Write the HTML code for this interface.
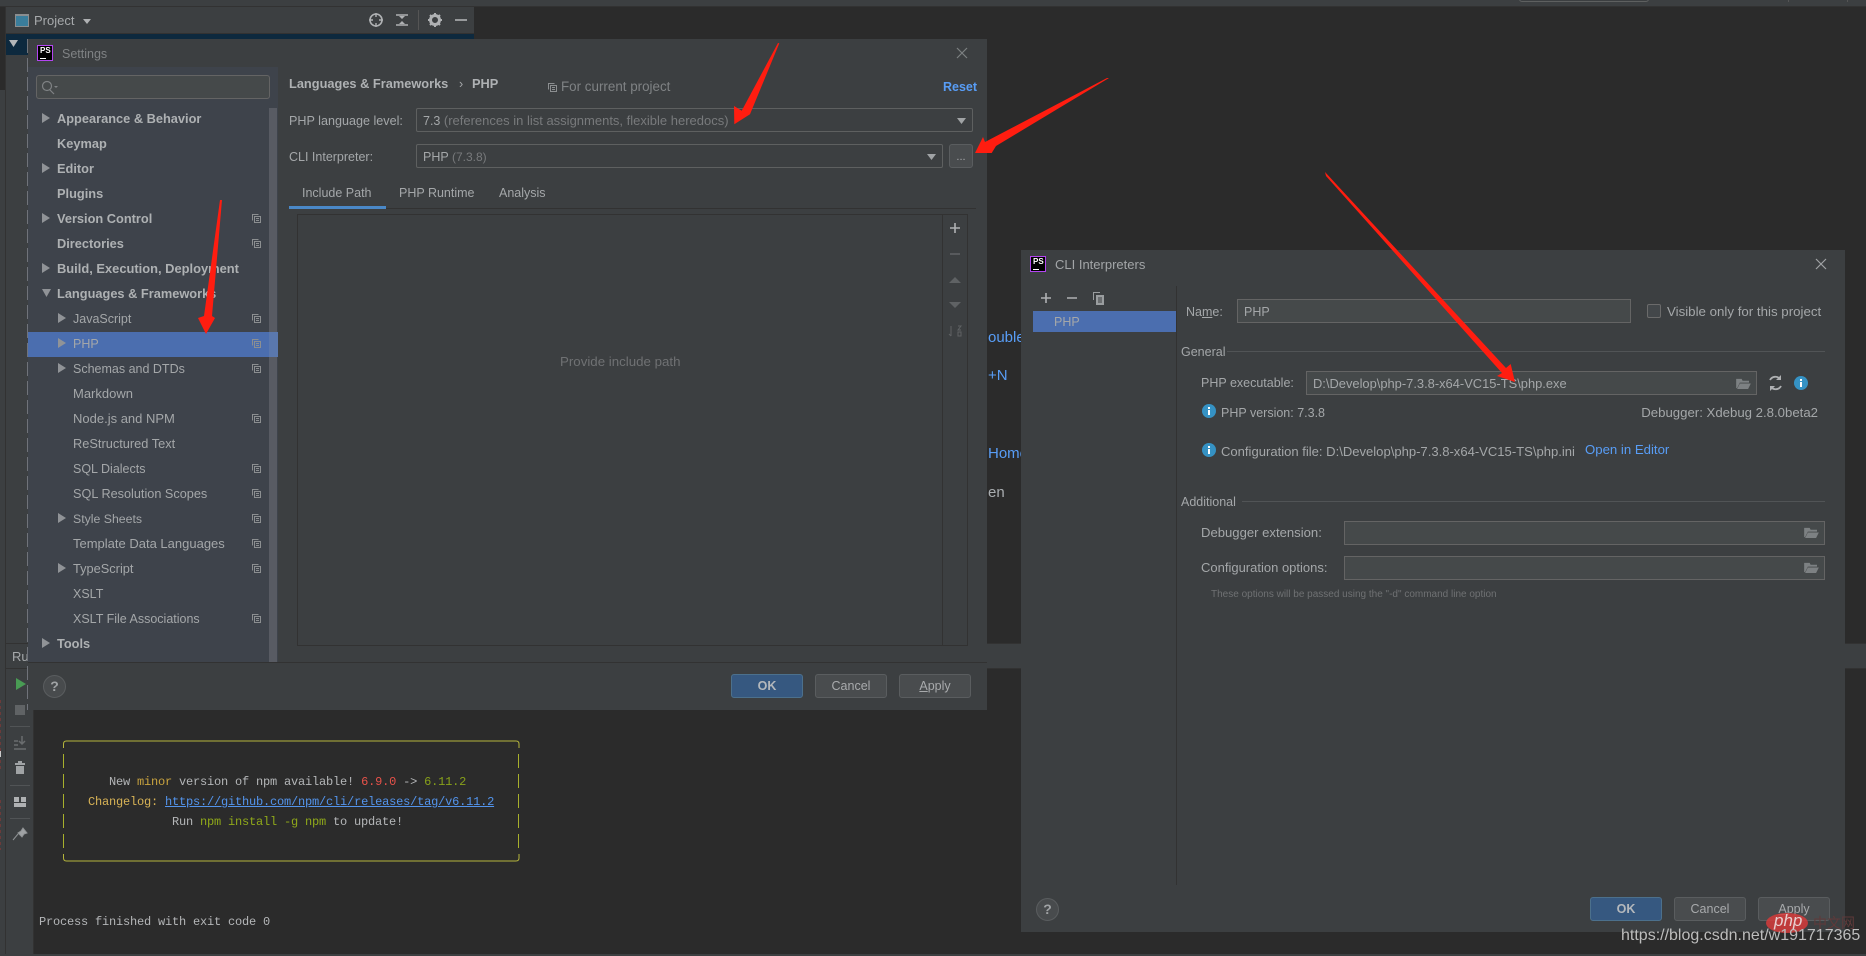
<!DOCTYPE html>
<html><head><meta charset="utf-8"><title>Settings</title>
<style>
html,body{margin:0;padding:0;background:#2b2b2b}
body{position:relative;width:1866px;height:956px;overflow:hidden;font-family:"Liberation Sans","Noto Sans CJK SC",sans-serif;font-size:12.5px;color:#a4a7a9}
div,span.a{box-sizing:border-box}
.b{position:absolute}
.t{position:absolute;white-space:nowrap;line-height:16px;height:16px;margin-top:-7px}
.bd{font-weight:bold;font-size:12.8px;color:#aeb1b3}
.m{font-family:"Liberation Mono",monospace;font-size:12px;letter-spacing:-.2px;color:#b4b6b8;margin-top:-8px}
.inp{position:absolute;background:#45494a;border:1px solid #646464}
.btn{position:absolute;height:24px;width:72px;background:#494c4e;border:1px solid #5a5d5f;border-radius:3px;text-align:center;line-height:22px;color:#a8aaac}
.ok{background:#365880;border-color:#4c708c;font-weight:bold;color:#b4b8bc}
svg.o{position:absolute;left:0;top:0;width:1866px;height:956px;pointer-events:none}
.ps{position:absolute;width:16px;height:16px;background:#000;border:1px solid #b345f1}
.ps i{position:absolute;left:2px;top:0;font:bold 8px/10px "Liberation Sans",sans-serif;color:#fff}
.ps b{position:absolute;left:2px;bottom:1px;width:6px;height:1px;background:#fff}
</style></head><body>

<!-- IDE background -->
<div class="b" style="left:0;top:0;width:1866px;height:6px;background:#3c3f41"></div>
<div class="b" style="left:0;top:6px;width:1866px;height:1px;background:#323232"></div>
<div class="b" style="left:1519px;top:-4px;width:130px;height:6px;border:1px solid #5e6060;border-radius:3px"></div>
<div class="b" style="left:1788px;top:0;width:1px;height:2px;background:#555"></div>
<div class="b" style="left:1847px;top:0;width:1px;height:2px;background:#555"></div>
<div class="b" style="left:6px;top:7px;width:468px;height:660px;background:#3c3f41"></div>
<div class="b" style="left:0;top:90px;width:6px;height:866px;background:#3c3f41"></div>
<div class="b" style="left:5px;top:7px;width:1px;height:947px;background:#323232"></div>
<div class="b" style="left:6px;top:33px;width:468px;height:1px;background:#323232"></div>
<div class="b" style="left:6px;top:34px;width:468px;height:21px;background:#0d293e"></div>
<div class="b" style="left:6px;top:643px;width:1860px;height:26px;background:#3c3f41;border-top:1px solid #323232;border-bottom:1px solid #323232"></div>
<div class="b" style="left:6px;top:669px;width:28px;height:285px;background:#3c3f41;border-right:1px solid #323232"></div>
<div class="b" style="left:0;top:954px;width:1866px;height:2px;background:#3c3f41"></div>

<div class="b" style="left:15px;top:14px;width:14px;height:13px;background:#3a7d9b;border:1px solid #8a8d8f;border-top-width:2px"></div>
<div class="t" style="left:34px;top:20px;font-size:13px;color:#a6a9ab">Project</div>
<div class="t" style="left:12px;top:656px;font-size:13px;color:#a6a9ab">Ru</div>
<div class="t" style="left:988px;top:337px;font-size:15px;color:#589df6;width:33px;overflow:hidden">ouble</div>
<div class="t" style="left:988px;top:375px;font-size:15px;color:#589df6">+N</div>
<div class="t" style="left:988px;top:453px;font-size:15px;color:#589df6;width:33px;overflow:hidden">Home</div>
<div class="t" style="left:988px;top:492px;font-size:15px;color:#a9adb0">en</div>

<!-- terminal -->
<div class="t m" style="left:109px;top:782px">New <span style="color:#c9a33f">minor</span> version of npm available! <span style="color:#e8524a">6.9.0</span> -&gt; <span style="color:#87a01a">6.11.2</span></div>
<div class="t m" style="left:88px;top:802px"><span style="color:#d8b356">Changelog:</span> <span style="color:#5394ec;text-decoration:underline">https://github.com/npm/cli/releases/tag/v6.11.2</span></div>
<div class="t m" style="left:172px;top:822px">Run <span style="color:#8fa81a">npm install -g npm</span> to update!</div>
<div class="t m" style="left:39px;top:922px">Process finished with exit code 0</div>

<svg class="o" viewBox="0 0 1866 956">
<defs><symbol id="cp" viewBox="0 0 9 9"><path d="M.5 6.500V.5H6.500M2.500 2.500h6v6h-6zM4 4.500h3M4 6.500h3" fill="none" stroke="#8c8f91"/></symbol>
<symbol id="fd" viewBox="0 0 16 12"><path d="M0 1h6l1 2h7v2H4L1 11H0zM4 6h12l-3 6H1z" fill="#7d8183"/></symbol>
<symbol id="inf" viewBox="0 0 14 14"><circle cx="7" cy="7" r="7" fill="#3592c4"/><path d="M6 3h2v2H6zM6 6h2v5H6z" fill="#fff"/></symbol></defs>
<!-- terminal box drawing -->
<path d="M63.500 748v-4q0-3 3-3H516q3 0 3 3v4M63.500 854v4q0 3 3 3H516q3 0 3-3v-4" fill="none" stroke="#b5b53c"/>
<path d="M63.500 754V854M518.500 754V854" fill="none" stroke="#a8b02c" stroke-dasharray="14 6"/>
<!-- project header icons -->
<circle cx="376" cy="20" r="6" fill="none" stroke="#afb1b3" stroke-width="1.600"/><path d="M376 13v4M376 23v4M369 20h4M379 20h4" stroke="#afb1b3" stroke-width="1.400"/>
<path d="M396 15h12M396 25h12" stroke="#afb1b3" stroke-width="1.400"/><path d="M402 19l-3-3h6zM402 21l-3 3h6z" fill="#afb1b3"/>
<path d="M418.500 10v20" stroke="#555"/>
<circle cx="435" cy="20" r="4.500" fill="none" stroke="#afb1b3" stroke-width="3"/><path d="M435 13v3M435 24v3M428 20h3M439 20h3M430 15l2 2M438 23l2 2M430 25l2-2M438 17l2-2" stroke="#afb1b3" stroke-width="2"/>
<path d="M455 20h12" stroke="#afb1b3" stroke-width="1.600"/>
<path d="M83 19h8l-4 5z" fill="#afb1b3"/>
<path d="M9 40h9l-4.500 7z" fill="#b4b6b8"/>
<!-- run toolbar -->
<path d="M16 678l10 6-10 6z" fill="#499c54"/>
<rect x="15" y="705" width="10" height="10" fill="#606365"/>
<path d="M10 726.500h20M10 785.500h20M10 818.500h20" stroke="#515456"/>
<path d="M14 741h4M14 745h4M14 749h12M22 736v7M19 741l3 3 3-3" stroke="#6a6d6f" stroke-width="1.500" fill="none"/>
<path d="M15 763h10v2H15zM18 761h4v2h-4zM16 766h8v8h-8z" fill="#a0a3a5"/>
<path d="M14 797h5v5h-5zM21 797h5v5h-5zM14 803h12v4H14z" fill="#afb1b3"/>
<path d="M23 828l4 5-3 1-2 3-4-4 3-2zM18 834l-5 6" stroke="#8f9294" fill="#9fa2a4"/>
<path d="M0 700v70M0 800v50" stroke="#7c3a38" stroke-width="1.500" stroke-dasharray="3 3"/>
<rect x="0" y="751" width="1" height="6" fill="#ccc"/>
</svg>

<!-- Settings dialog -->
<div class="b" style="left:27px;top:39px;width:1px;height:671px;background:repeating-linear-gradient(#70737a 0 14px,transparent 14px 19px)"></div>
<div class="b" style="left:28px;top:39px;width:959px;height:671px;background:#3c3f41"></div>
<div class="b" style="left:28px;top:67px;width:250px;height:596px;background:#3e434b"></div>
<div class="b" style="left:28px;top:662px;width:959px;height:1px;background:#323232"></div>
<div class="ps" style="left:37px;top:45px"><i>PS</i><b></b></div>
<div class="t" style="left:62px;top:53px;font-size:12.500px;color:#7f8284">Settings</div>
<div class="inp" style="left:36px;top:75px;width:234px;height:24px;border-radius:3px"></div>
<div class="b" style="left:269px;top:108px;width:8px;height:554px;background:#585b63"></div>
<div class="b" style="left:28px;top:332px;width:250px;height:25px;background:#4b6eaf"></div>
<div class="b" style="left:269px;top:332px;width:9px;height:25px;background:#5a78ae"></div>

<div class="t bd" style="left:57px;top:118px">Appearance &amp; Behavior</div>
<div class="t bd" style="left:57px;top:143px">Keymap</div>
<div class="t bd" style="left:57px;top:168px">Editor</div>
<div class="t bd" style="left:57px;top:193px">Plugins</div>
<div class="t bd" style="left:57px;top:218px">Version Control</div>
<div class="t bd" style="left:57px;top:243px">Directories</div>
<div class="t bd" style="left:57px;top:268px;font-size:12.9px">Build, Execution, Deployment</div>
<div class="t bd" style="left:57px;top:293px">Languages &amp; Frameworks</div>
<div class="t" style="left:73px;top:318px">JavaScript</div>
<div class="t" style="left:73px;top:343px">PHP</div>
<div class="t" style="left:73px;top:368px">Schemas and DTDs</div>
<div class="t" style="left:73px;top:393px;font-size:13px">Markdown</div>
<div class="t" style="left:73px;top:418px;font-size:13px">Node.js and NPM</div>
<div class="t" style="left:73px;top:443px;font-size:12.800px">ReStructured Text</div>
<div class="t" style="left:73px;top:468px">SQL Dialects</div>
<div class="t" style="left:73px;top:493px;font-size:12.700px">SQL Resolution Scopes</div>
<div class="t" style="left:73px;top:518px;font-size:12.300px">Style Sheets</div>
<div class="t" style="left:73px;top:543px;font-size:13px">Template Data Languages</div>
<div class="t" style="left:73px;top:568px;font-size:12.800px">TypeScript</div>
<div class="t" style="left:73px;top:593px">XSLT</div>
<div class="t" style="left:73px;top:618px">XSLT File Associations</div>
<div class="t bd" style="left:57px;top:643px">Tools</div>

<div class="t bd" style="left:289px;top:83px">Languages &amp; Frameworks</div>
<div class="t" style="left:459px;top:83px">›</div>
<div class="t bd" style="left:472px;top:83px">PHP</div>
<div class="t" style="left:561px;top:86px;color:#7f8284;font-size:13.400px">For current project</div>
<div class="t bd" style="left:943px;top:86px;color:#589df6;font-size:12.500px">Reset</div>
<div class="t" style="left:289px;top:120px;font-size:12.600px">PHP language level:</div>
<div class="t" style="left:289px;top:156px">CLI Interpreter:</div>
<div class="b" style="left:416px;top:108px;width:557px;height:24px;border:1px solid #5e6060;border-radius:2px"></div>
<div class="b" style="left:416px;top:144px;width:527px;height:24px;border:1px solid #5e6060;border-radius:2px"></div>
<div class="t" style="left:423px;top:120px">7.3 <span style="color:#787a7c;font-size:13px">(references in list assignments, flexible heredocs)</span></div>
<div class="t" style="left:423px;top:156px">PHP <span style="color:#787a7c;font-size:12px">(7.3.8)</span></div>
<div class="btn" style="left:949px;top:144px;width:24px;line-height:24px;font-size:11px">...</div>
<div class="t" style="left:302px;top:192px">Include Path</div>
<div class="t" style="left:399px;top:192px">PHP Runtime</div>
<div class="t" style="left:499px;top:192px">Analysis</div>
<div class="b" style="left:289px;top:208px;width:687px;height:1px;background:#323232"></div>
<div class="b" style="left:289px;top:206px;width:97px;height:3px;background:#4a88c7"></div>
<div class="b" style="left:297px;top:214px;width:671px;height:432px;border:1px solid #323232"></div>
<div class="b" style="left:942px;top:215px;width:1px;height:430px;background:#323232"></div>
<div class="t" style="left:560px;top:361px;color:#6f7173;font-size:13.300px">Provide include path</div>
<div class="b" style="left:43px;top:675px;width:23px;height:23px;border-radius:50%;background:#484b4d;border:1px solid #5a5d5f;text-align:center;line-height:21px;font-weight:bold;font-size:14px;color:#a0a3a5">?</div>
<div class="btn ok" style="left:731px;top:674px">OK</div>
<div class="btn" style="left:815px;top:674px">Cancel</div>
<div class="btn" style="left:899px;top:674px"><u>A</u>pply</div>

<!-- CLI dialog -->
<div class="b" style="left:1021px;top:250px;width:824px;height:682px;background:#3c3f41"></div>
<div class="ps" style="left:1030px;top:256px"><i>PS</i><b></b></div>
<div class="t" style="left:1055px;top:264px;color:#a3a6a8;font-size:13px">CLI Interpreters</div>
<div class="b" style="left:1176px;top:286px;width:1px;height:599px;background:#323232"></div>
<div class="b" style="left:1033px;top:311px;width:143px;height:21px;background:#4b6eaf"></div>
<div class="t" style="left:1054px;top:321px">PHP</div>
<div class="t" style="left:1186px;top:311px">Na<u>m</u>e:</div>
<div class="inp" style="left:1237px;top:299px;width:394px;height:24px"></div>
<div class="t" style="left:1244px;top:311px">PHP</div>
<div class="b" style="left:1647px;top:304px;width:14px;height:14px;border:1px solid #6b6b6b;background:#43474a;border-radius:2px"></div>
<div class="t" style="left:1667px;top:311px;font-size:13.300px">Visible only for this project</div>
<div class="t" style="left:1181px;top:351px">General</div>
<div class="b" style="left:1227px;top:351px;width:598px;height:1px;background:#515456"></div>
<div class="t" style="left:1201px;top:382px">PHP executable:</div>
<div class="inp" style="left:1306px;top:371px;width:451px;height:24px"></div>
<div class="t" style="left:1313px;top:383px;font-size:12.900px">D:\Develop\php-7.3.8-x64-VC15-TS\php.exe</div>
<div class="t" style="left:1221px;top:412px">PHP version: 7.3.8</div>
<div class="t" style="left:1618px;top:412px;width:200px;text-align:right;font-size:13.200px">Debugger: Xdebug 2.8.0beta2</div>
<div class="t" style="left:1221px;top:451px;font-size:13.050px">Configuration file: D:\Develop\php-7.3.8-x64-VC15-TS\php.ini</div>
<div class="t" style="left:1585px;top:449px;color:#589df6;font-size:13.200px">Open in Editor</div>
<div class="t" style="left:1181px;top:501px">Additional</div>
<div class="b" style="left:1242px;top:501px;width:583px;height:1px;background:#515456"></div>
<div class="t" style="left:1201px;top:532px;font-size:13.100px">Debugger extension:</div>
<div class="t" style="left:1201px;top:567px;font-size:13px">Configuration options:</div>
<div class="inp" style="left:1344px;top:521px;width:481px;height:24px"></div>
<div class="inp" style="left:1344px;top:556px;width:481px;height:24px"></div>
<div class="t" style="left:1211px;top:594px;font-size:10px;color:#6f7173">These options will be passed using the "-d" command line option</div>
<div class="b" style="left:1036px;top:898px;width:23px;height:23px;border-radius:50%;background:#484b4d;border:1px solid #5a5d5f;text-align:center;line-height:21px;font-weight:bold;font-size:14px;color:#a0a3a5">?</div>
<div class="btn ok" style="left:1590px;top:897px">OK</div>
<div class="btn" style="left:1674px;top:897px">Cancel</div>
<div class="btn" style="left:1758px;top:897px"><u>A</u>pply</div>

<svg class="o" viewBox="0 0 1866 956">
<!-- settings icons -->
<path d="M957 48l10 10M967 48l-10 10" stroke="#7d8082" stroke-width="1.200"/>
<circle cx="47" cy="86" r="4.500" fill="none" stroke="#7f8284" stroke-width="1.200"/><path d="M50 90l4 4" stroke="#7f8284" stroke-width="1.200"/><path d="M54 86h4l-2 2z" fill="#7f8284"/>
<g fill="#909397">
<path d="M42 113l8 5-8 5zM42 163l8 5-8 5zM42 213l8 5-8 5zM42 263l8 5-8 5zM42 638l8 5-8 5z"/>
<path d="M42 289h9l-4.500 8z"/>
<path d="M58 313l8 5-8 5zM58 338l8 5-8 5zM58 363l8 5-8 5zM58 513l8 5-8 5zM58 563l8 5-8 5z"/>
</g>
<use href="#cp" x="252" y="214" width="9" height="9"/><use href="#cp" x="252" y="239" width="9" height="9"/><use href="#cp" x="252" y="314" width="9" height="9"/><use href="#cp" x="252" y="339" width="9" height="9"/><use href="#cp" x="252" y="364" width="9" height="9"/><use href="#cp" x="252" y="414" width="9" height="9"/><use href="#cp" x="252" y="464" width="9" height="9"/><use href="#cp" x="252" y="489" width="9" height="9"/><use href="#cp" x="252" y="514" width="9" height="9"/><use href="#cp" x="252" y="539" width="9" height="9"/><use href="#cp" x="252" y="564" width="9" height="9"/><use href="#cp" x="252" y="614" width="9" height="9"/>
<use href="#cp" x="548" y="83" width="9" height="9"/>
<path d="M957 118h9l-4.500 6zM927 154h9l-4.500 6z" fill="#a0a3a5"/>
<path d="M950 228h10M955 223v10" stroke="#afb1b3" stroke-width="1.600"/>
<path d="M950 254h10" stroke="#5f6264" stroke-width="1.600"/>
<path d="M949 283l6-6 6 6zM949 302h12l-6 6z" fill="#5f6264"/>
<path d="M951 326v10M951 336l-2-2M958 326h3l-3 4h3M958 332h3v4h-3z" stroke="#5f6264" fill="none"/>
<!-- cli icons -->
<path d="M1816 259l10 10M1826 259l-10 10" stroke="#a0a3a5" stroke-width="1.200"/>
<path d="M1041 298h10M1046 293v10M1067 298h10" stroke="#afb1b3" stroke-width="1.600"/>
<path d="M1093 292h7v1h-6v7h-1zM1096 295h8v10h-8z" fill="#9a9d9f"/><path d="M1098 298h4M1098 300h4M1098 302h4" stroke="#3c3f41"/>
<use href="#inf" x="1202" y="404" width="14" height="14"/><use href="#inf" x="1202" y="443" width="14" height="14"/><use href="#inf" x="1794" y="376" width="14" height="14"/>
<use href="#fd" x="1736" y="378" width="15" height="11"/><use href="#fd" x="1804" y="527" width="15" height="11"/><use href="#fd" x="1804" y="562" width="15" height="11"/>
<path d="M1770 380a6 6 0 0 1 10-1M1781 386a6 6 0 0 1-10 1" fill="none" stroke="#afb1b3" stroke-width="1.800"/><path d="M1781 375v5h-5zM1770 391v-5h5z" fill="#afb1b3"/>
<!-- red arrows -->
<g fill="#ff1d10">
<polygon points="779.300,43.300 750,114.300 734.300,124.300 734,106 741.700,110.700 778,43"/>
<polygon points="1109,78 996,146 991.700,153 975,153 983,137 985,142 1107,78"/>
<polygon points="1325,172 1506,368 1510.700,364 1515,382 1497,376 1502,373 1326,176"/>
<polygon points="222,200 212,316 215,318 206,334 198,318 204,316 220,200"/>
</g>
<!-- php logo -->
<ellipse cx="1787" cy="923" rx="21" ry="10" fill="#d63b3b" fill-opacity=".85"/>
</svg>
<div class="t" style="left:1774px;top:920px;font-size:17px;font-style:italic;color:#e8d0d0">php</div>
<div class="t" style="left:1813px;top:922px;font-size:14px;color:#5f3a3a;letter-spacing:0">中文网</div>
<div class="t" style="left:1621px;top:935px;font-size:16px;color:#bdbdbd">https://blog.csdn.net/w191717365</div>
</body></html>
